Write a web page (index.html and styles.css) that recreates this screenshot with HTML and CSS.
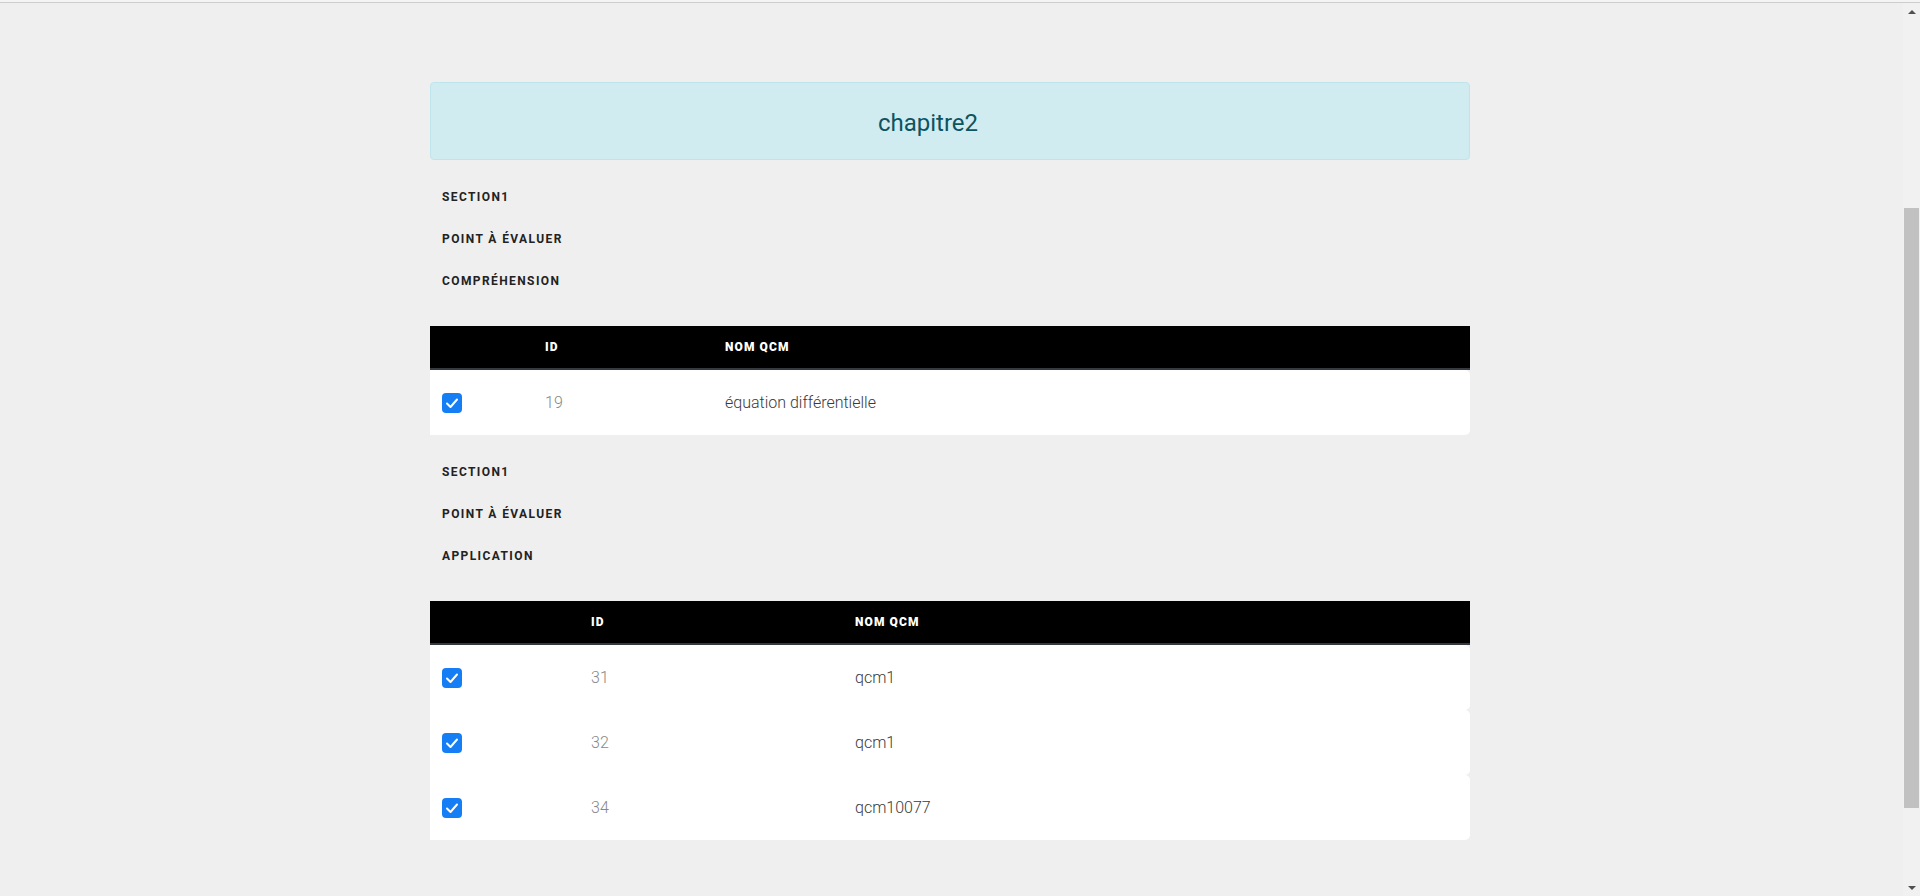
FILE: index.html
```html
<!DOCTYPE html>
<html lang="fr">
<head>
<meta charset="utf-8">
<title>chapitre2</title>
<link rel="stylesheet" href="styles.css">
</head>
<body>
<div class="topline"></div>
<div class="frame">
  <main class="page">
    <div class="content">
      <div class="alert">chapitre2</div>

      <section class="group">
        <div class="labels">
          <p>Section1</p>
          <p>Point à évaluer</p>
          <p>Compréhension</p>
        </div>
        <table class="qcm qcm-a">
          <colgroup><col class="c-check"><col class="c-id"><col class="c-name"></colgroup>
          <thead><tr><th></th><th>ID</th><th>Nom QCM</th></tr></thead>
          <tbody>
            <tr>
              <td><span class="check"><svg viewBox="0 0 20 20" width="20" height="20"><polyline points="5,10.5 8.5,14 15,6.5" fill="none" stroke="#fff" stroke-width="2" stroke-linecap="round" stroke-linejoin="round"/></svg></span></td>
              <td class="id">19</td>
              <td class="name">équation différentielle</td>
            </tr>
          </tbody>
        </table>
      </section>

      <section class="group">
        <div class="labels">
          <p>Section1</p>
          <p>Point à évaluer</p>
          <p>Application</p>
        </div>
        <table class="qcm qcm-b">
          <colgroup><col class="c-check"><col class="c-id"><col class="c-name"></colgroup>
          <thead><tr><th></th><th>ID</th><th>Nom QCM</th></tr></thead>
          <tbody>
            <tr>
              <td><span class="check"><svg viewBox="0 0 20 20" width="20" height="20"><polyline points="5,10.5 8.5,14 15,6.5" fill="none" stroke="#fff" stroke-width="2" stroke-linecap="round" stroke-linejoin="round"/></svg></span></td>
              <td class="id">31</td>
              <td class="name">qcm1</td>
            </tr>
            <tr>
              <td><span class="check"><svg viewBox="0 0 20 20" width="20" height="20"><polyline points="5,10.5 8.5,14 15,6.5" fill="none" stroke="#fff" stroke-width="2" stroke-linecap="round" stroke-linejoin="round"/></svg></span></td>
              <td class="id">32</td>
              <td class="name">qcm1</td>
            </tr>
            <tr>
              <td><span class="check"><svg viewBox="0 0 20 20" width="20" height="20"><polyline points="5,10.5 8.5,14 15,6.5" fill="none" stroke="#fff" stroke-width="2" stroke-linecap="round" stroke-linejoin="round"/></svg></span></td>
              <td class="id">34</td>
              <td class="name">qcm10077</td>
            </tr>
          </tbody>
        </table>
      </section>
    </div>
  </main>
  <div class="scrollbar">
    <span class="arrow up"></span>
    <div class="track"><div class="thumb"></div></div>
    <span class="arrow down"></span>
  </div>
</div>
</body>
</html>
```
FILE: styles.css
```css
html, body {
  margin: 0;
  padding: 0;
  height: 100%;
}
body {
  background: #efefef;
  font-family: Roboto, "Liberation Sans", sans-serif;
  color: #212529;
  overflow: hidden;
  display: flex;
  flex-direction: column;
}
.topline {
  height: 2px;
  background: #f4f4f4;
  border-bottom: 1px solid #cdcdcd;
  flex: none;
}
.frame {
  flex: 1;
  display: flex;
  min-height: 0;
}
.page {
  flex: 1;
  padding: 79px 3px 0 0;
}
.content {
  width: 1040px;
  margin: 0 auto;
}
.alert {
  background: #d1ecf1;
  border: 1px solid #bee5eb;
  border-radius: 4px;
  color: #0c5460;
  font-size: 24px;
  font-weight: 400;
  line-height: 29px;
  text-align: center;
  padding: 26px 64px 21px 20px;
}
.group {
  padding-top: 16px;
}
.labels p {
  margin: 0;
  padding-left: 12px;
  height: 42px;
  line-height: 42px;
  font-size: 12px;
  font-weight: 700;
  letter-spacing: 1.4px;
  text-transform: uppercase;
  color: #222;
}
.qcm {
  margin-top: 24px;
  width: 100%;
  border-collapse: separate;
  border-spacing: 0;
  table-layout: fixed;
}
.qcm-a .c-check { width: 103px; }
.qcm-a .c-id { width: 180px; }
.qcm-b .c-check { width: 149px; }
.qcm-b .c-id { width: 264px; }
.qcm th {
  background: #000;
  color: #fff;
  height: 42px;
  padding: 0 12px;
  text-align: left;
  font-size: 12px;
  font-weight: 900;
  letter-spacing: 1.1px;
  text-transform: uppercase;
  border-bottom: 2px solid #343a40;
  vertical-align: middle;
}
.qcm td {
  background: #fff;
  height: 65px;
  padding: 0 12px;
  vertical-align: middle;
  font-size: 16px;
  font-weight: 300;
}
.qcm td:last-child {
  border-top-right-radius: 5px;
  border-bottom-right-radius: 5px;
}
.qcm td.id {
  color: #888;
}
.qcm td.name {
  color: #3a3a3a;
}
.check {
  display: block;
  width: 20px;
  height: 20px;
  border-radius: 4px;
  background: #157ef4;
}
.check svg {
  display: block;
}
.scrollbar {
  width: 17px;
  flex: none;
  background: #f1f1f1;
  display: flex;
  flex-direction: column;
}
.arrow {
  height: 17px;
  flex: none;
  display: flex;
  align-items: center;
  justify-content: center;
}
.arrow::before {
  content: "";
  border-left: 4px solid transparent;
  border-right: 4px solid transparent;
}
.arrow.up::before {
  border-bottom: 4px solid #505050;
}
.arrow.down::before {
  border-top: 4px solid #505050;
}
.track {
  flex: 1;
  padding-top: 188px;
  display: flex;
  justify-content: center;
}
.thumb {
  width: 15px;
  height: 600px;
  background: #c1c1c1;
}
```
